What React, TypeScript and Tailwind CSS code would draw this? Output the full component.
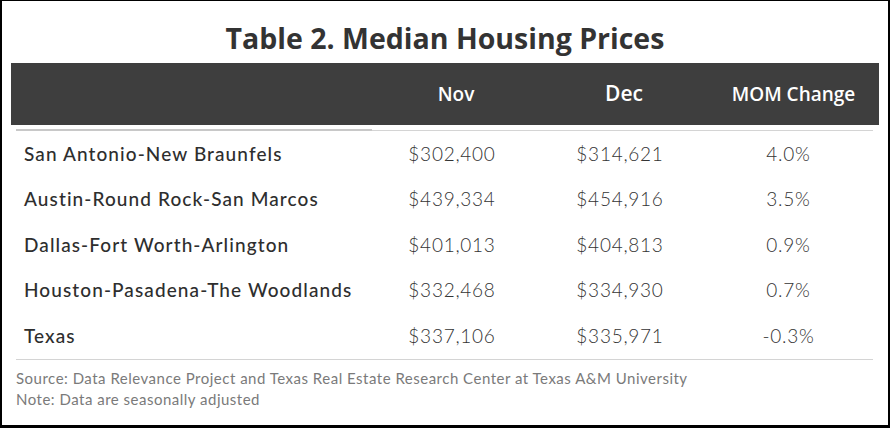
const rows = [
    { name: 'San Antonio-New Braunfels', nov: '$302,400', dec: '$314,621', mom: '4.0%' },
    { name: 'Austin-Round Rock-San Marcos', nov: '$439,334', dec: '$454,916', mom: '3.5%' },
    { name: 'Dallas-Fort Worth-Arlington', nov: '$401,013', dec: '$404,813', mom: '0.9%' },
    { name: 'Houston-Pasadena-The Woodlands', nov: '$332,468', dec: '$334,930', mom: '0.7%' },
    { name: 'Texas', nov: '$337,106', dec: '$335,971', mom: '-0.3%' },
];

const heading = "font-['Open_Sans',sans-serif]";
const body = "font-['Lato',sans-serif]";

export default function App() {
    return (
        <div className="w-[890px] h-[428px] bg-white border-black border-t border-l-2 border-r-2 border-b-[3px] overflow-hidden">
            <h1 className={`${heading} text-center text-[28.5px] leading-[38px] font-bold text-[#333333] pt-[18px] pb-[6px]`}>
                Table 2. Median Housing Prices
            </h1>

            <div className={`${heading} ml-[9px] w-[868px] h-[62px] bg-[#3e3e3e] grid grid-cols-[361px_168px_168px_171px] items-center text-white font-semibold`}>
                <div />
                <div className="text-center text-[19px]">Nov</div>
                <div className="text-center text-[21px]">Dec</div>
                <div className="text-center text-[19px]">MOM Change</div>
            </div>

            <div className="ml-[14px] mt-[4px] w-[857px] flex items-end">
                <div className="w-[356px] h-[2px] bg-[#c8c8c8]" />
                <div className="flex-1 h-px bg-[#d4d4d4]" />
            </div>

            <div className="ml-[9px] w-[868px]">
                {rows.map((r) => (
                    <div key={r.name} className={`${body} h-[45.5px] grid grid-cols-[361px_168px_168px_171px] items-center text-[19px]`}>
                        <div className="pl-[13px] font-medium tracking-[1.1px] text-[#2e2e2e]">{r.name}</div>
                        <div className="text-center pr-[8px] font-light tracking-[0.75px] text-[#333333]">{r.nov}</div>
                        <div className="text-center pr-[8px] font-light tracking-[0.75px] text-[#333333]">{r.dec}</div>
                        <div className="text-center pr-[10px] font-light tracking-[0.75px] text-[#333333]">{r.mom}</div>
                    </div>
                ))}
            </div>

            <div className="ml-[14px] w-[857px] h-px bg-[#d4d4d4]" />

            <div className={`${body} pl-[14px] pt-[8px] text-[15px] leading-[21px] tracking-[0.5px] text-[#7a7a7a]`}>
                <p>Source: Data Relevance Project and Texas Real Estate Research Center at Texas A&amp;M University</p>
                <p>Note: Data are seasonally adjusted</p>
            </div>
        </div>
    );
}
